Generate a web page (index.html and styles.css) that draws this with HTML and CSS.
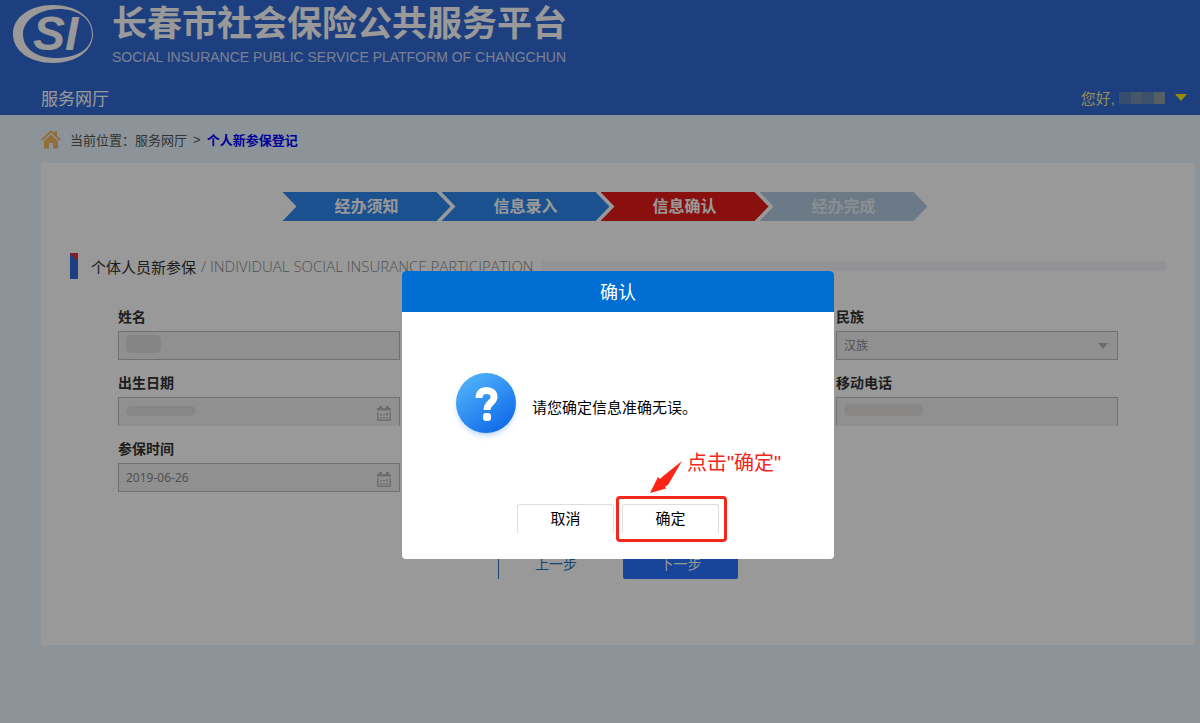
FILE: index.html
```html
<!DOCTYPE html>
<html lang="zh-CN">

<head>
    <meta charset="UTF-8">
    <meta name="viewport" content="width=device-width, initial-scale=1.0">
    <title>长春市社会保险公共服务平台</title>
    <link rel="stylesheet" href="styles.css">
</head>

<body>
    <header class="header">
        <div class="brand">
            <svg class="logo" width="82" height="60" viewBox="0 0 82 60">
                <path fill="#fff" fill-rule="evenodd" d="M41 1C18 1 1 13 1 30s17 29 40 29 40-12 40-29S64 1 41 1zM47 5c19 0 33 10 33 25S65 54 44 54 11 44 11 30 27 5 47 5z" />
                <text class="logo-text" x="21" y="46">SI</text>
            </svg>
            <div class="brand-text">
                <h1>长春市社会保险公共服务平台</h1>
                <p>SOCIAL INSURANCE PUBLIC SERVICE PLATFORM OF CHANGCHUN</p>
            </div>
        </div>
        <div class="nav">
            <a class="nav-title" href="#">服务网厅</a>
            <button type="button" class="user">
                您好,
                <span class="mosaic"><i></i><i></i><i></i><i></i></span>
                <span class="user-arrow"></span>
            </button>
        </div>
    </header>

    <nav class="breadcrumb">
        <svg width="20" height="20" viewBox="0 0 20 20" fill="#f0b860">
            <path d="M0 10.500L10 1l3.500 3.300V2H16v4.700l4 3.800-1.300 1.300L10 3.700l-8.700 8.100z" />
            <path d="M3 12l7-6.500 7 6.500v7.500h-5V14H8v5.500H3z" />
        </svg>
        <span>当前位置：</span>
        <a href="#">服务网厅</a>
        <span class="sep">&gt;</span>
        <a href="#" class="current">个人新参保登记</a>
    </nav>

    <main class="panel">
        <ol class="steps">
            <li class="first">经办须知</li>
            <li>信息录入</li>
            <li class="active">信息确认</li>
            <li class="todo">经办完成</li>
        </ol>

        <div class="section-title">
            <span class="mark"></span>
            <h2>个体人员新参保</h2>
            <span class="en">/ INDIVIDUAL SOCIAL INSURANCE PARTICIPATION</span>
            <span class="line"></span>
        </div>

        <form id="infoForm">
            <div class="fields">
                <div class="field">
                    <label for="name">姓名</label>
                    <div class="control">
                        <input type="text" id="name" readonly>
                        <span class="blur blur-name"></span>
                    </div>
                </div>
                <div class="field right">
                    <label for="nation">民族</label>
                    <div class="control">
                        <select id="nation">
                            <option>汉族</option>
                        </select>
                        <span class="select-arrow"></span>
                    </div>
                </div>
                <div class="field">
                    <label for="birthday">出生日期</label>
                    <div class="control">
                        <input type="text" id="birthday" class="open" readonly>
                        <span class="blur blur-date"></span>
                        <svg class="calendar" width="14" height="16" viewBox="0 0 14 16">
                            <path d="M0 5.500V3h2V1h3v2h4V1h3v2h2v2.500zM0 7h1.500v7.500h11V7H14v9H0zM3 9h2v1.500H3zM6 9h2v1.500H6zM9 8h2v2.500H9zM3 12h2v1.500H3zM6 12h2v1.500H6zM9 12h2v1.500H9z" />
                        </svg>
                    </div>
                </div>
                <div class="field right">
                    <label for="phone">移动电话</label>
                    <div class="control">
                        <input type="text" id="phone" class="open" readonly>
                        <span class="blur blur-phone"></span>
                    </div>
                </div>
                <div class="field">
                    <label for="start">参保时间</label>
                    <div class="control">
                        <input type="text" id="start" value="2019-06-26" readonly>
                        <svg class="calendar" width="14" height="16" viewBox="0 0 14 16">
                            <path d="M0 5.500V3h2V1h3v2h4V1h3v2h2v2.500zM0 7h1.500v7.500h11V7H14v9H0zM3 9h2v1.500H3zM6 9h2v1.500H6zM9 8h2v2.500H9zM3 12h2v1.500H3zM6 12h2v1.500H6zM9 12h2v1.500H9z" />
                        </svg>
                    </div>
                </div>
            </div>
            <div class="form-buttons">
                <button type="button" class="prev">上一步</button>
                <button type="button" class="next">下一步</button>
            </div>
        </form>
    </main>

    <!-- Confirm dialog -->
    <div class="overlay">
        <div class="dialog" role="dialog" aria-labelledby="dialogTitle">
            <h3 id="dialogTitle">确认</h3>
            <div class="dialog-body">
                <svg class="question" width="76" height="76" viewBox="0 0 76 76">
                    <defs>
                        <linearGradient id="ball" x1="0.100" y1="0" x2="0.800" y2="1">
                            <stop offset="0" stop-color="#55b8fc" />
                            <stop offset="1" stop-color="#0c68e8" />
                        </linearGradient>
                        <filter id="glow" x="-20%" y="-20%" width="140%" height="140%">
                            <feGaussianBlur stdDeviation="3" />
                        </filter>
                    </defs>
                    <circle cx="38" cy="42" r="28" fill="#a9cdfb" filter="url(#glow)" />
                    <circle cx="38" cy="38" r="30" fill="url(#ball)" />
                    <path d="M31 33c0-5 3-7.500 7.500-7.500s7.500 2.500 7.500 6.500c0 6-7 5.500-7 13" fill="none" stroke="#fff" stroke-width="7" />
                    <rect x="35" y="48" width="8" height="8" rx="3" fill="#fff" />
                </svg>
                <p>请您确定信息准确无误。</p>
            </div>
            <div class="dialog-buttons">
                <button type="button">取消</button>
                <button type="button">确定</button>
            </div>

            <!-- Hint for the user -->
            <span class="hint-box"></span>
            <svg class="hint-arrow" width="34" height="34" viewBox="0 0 34 34">
                <path fill="#fb2416" d="M32 1L18 25l-3 1.500 1 2L0 33 8 17l2 2 2-2z" />
            </svg>
            <span class="hint-text">点击"确定"</span>
        </div>
    </div>
</body>

</html>
```
FILE: styles.css
```css
* {
    box-sizing: border-box;
}

body {
    margin: 0;
    min-height: 100vh;
    background-color: #eaf5ff;
    color: #333;
    font-family: "Liberation Sans", "Noto Sans CJK SC", sans-serif;
    font-size: 14px;
}

h1,
h2,
h3,
p,
ol {
    margin: 0;
    padding: 0;
    font-weight: normal;
}

a {
    color: inherit;
    text-decoration: none;
}

button,
input,
select {
    font-family: inherit;
    border-radius: 0;
}

/* Header */
.header {
    height: 115px;
    background-color: #3369d4;
    color: #fff;
}

.brand {
    display: flex;
    gap: 18px;
    height: 83px;
    padding: 4px 12px 0;
}

.logo-text {
    fill: #fff;
    font-family: "Liberation Sans", sans-serif;
    font-size: 48px;
    font-weight: bold;
    font-style: italic;
}

.brand-text h1 {
    font-size: 35px;
    font-weight: bold;
    line-height: 40px;
}

.brand-text p {
    color: #c8d8f5;
    font-size: 14px;
    line-height: 26px;
}

.nav {
    display: flex;
    justify-content: space-between;
    align-items: center;
    height: 32px;
    padding: 0 13px 3px 41px;
}

.nav-title {
    font-size: 17px;
}

.user {
    display: flex;
    align-items: center;
    gap: 4px;
    padding: 0;
    border: none;
    background: none;
    color: #eeee90;
    font-size: 15px;
}

.mosaic {
    display: flex;
    width: 46px;
    height: 12px;
}

.mosaic i {
    flex: 1;
    background-color: #5a80b8;
}

.mosaic i:nth-child(2) {
    background-color: #7490ae;
}

.mosaic i:nth-child(3) {
    background-color: #6487b4;
}

.mosaic i:nth-child(4) {
    background-color: #8ca0a4;
}

.user-arrow {
    margin-left: 6px;
    border: 6px solid transparent;
    border-top: 7px solid #ffe600;
    border-bottom: none;
}

/* Breadcrumb */
.breadcrumb {
    display: flex;
    align-items: center;
    height: 48px;
    padding: 0 41px;
    color: #555;
    font-size: 13px;
}

.breadcrumb svg {
    margin-right: 9px;
}

.breadcrumb .sep {
    margin: 0 6px;
}

.breadcrumb .current {
    color: #00f;
    font-weight: bold;
}

/* Page panel */
.panel {
    margin: 0 5px 0 41px;
    padding: 29px 29px 66px;
    background-color: #fff;
}

.steps {
    display: flex;
    justify-content: center;
    margin-right: 26px;
    list-style: none;
}

.steps li {
    width: 168px;
    margin-left: -9px;
    background-color: #2d87ee;
    clip-path: polygon(0 0, 154px 0, 100% 50%, 154px 100%, 0 100%, 14px 50%);
    color: #fff;
    font-size: 16px;
    font-weight: bold;
    line-height: 29px;
    text-align: center;
}

.steps .first {
    margin-left: 0;
}

.steps .active {
    background-color: #e61a1a;
}

.steps .todo {
    background-color: #b2cbe0;
    color: #e6edf3;
}

.section-title {
    display: flex;
    align-items: center;
    height: 26px;
    margin-top: 32px;
}

.mark {
    width: 8px;
    height: 26px;
    margin-right: 13px;
    background: linear-gradient(45deg, #3369d4 75%, #e03040 75%);
}

.section-title h2 {
    font-size: 15px;
}

.section-title .en {
    margin: 0 8px 0 5px;
    color: #888;
    font-family: "Open Sans", sans-serif;
    font-size: 15px;
    font-weight: 300;
}

.section-title .line {
    flex: 1;
    height: 10px;
    background-color: #f5f5fc;
}

/* Form */
.fields {
    display: grid;
    grid-template-columns: repeat(3, 1fr);
    gap: 13px 77px;
    padding: 28px 48px 0;
}

.field {
    grid-column: 1;
}

.field.right {
    grid-column: 3;
}

.field label {
    display: block;
    margin-bottom: 4px;
    font-weight: bold;
    line-height: 20px;
}

.control {
    position: relative;
}

.control input,
.control select {
    display: block;
    width: 100%;
    height: 29px;
    padding: 0 7px;
    border: 1px solid #bbb;
    background-color: #f0f0f0;
    color: #888;
    font-family: "Noto Sans", "Noto Sans CJK SC", sans-serif;
    font-size: 12px;
    appearance: none;
}

.control .open {
    border-bottom-color: #f0f0f0;
}

.select-arrow {
    position: absolute;
    top: 12px;
    right: 10px;
    border: 5px solid transparent;
    border-top: 6px solid #b4b4b4;
    border-bottom: none;
}

.calendar {
    position: absolute;
    top: 8px;
    right: 9px;
    fill: #b8b8b8;
}

/* Masked personal data */
.blur {
    position: absolute;
    top: 4px;
    left: 8px;
    width: 35px;
    height: 18px;
    border-radius: 5px;
    background-color: #dedede;
}

.blur-date {
    top: 9px;
    width: 70px;
    height: 10px;
    background-color: #e2e2e2;
}

.blur-phone {
    top: 7px;
    width: 79px;
    height: 12px;
    background-color: #e4e1df;
}

.form-buttons {
    display: flex;
    justify-content: center;
    gap: 10px;
    margin-top: 58px;
}

.form-buttons button {
    width: 115px;
    height: 29px;
    padding: 0 0 3px;
    border: none;
    font-size: 14px;
}

.form-buttons .prev {
    border-left: 1px solid #2874b8;
    background-color: #fff;
    color: #2874b8;
}

.form-buttons .next {
    border-radius: 2px;
    background-color: #2673ff;
    color: #fff;
}

/* Dialog */
.overlay {
    position: fixed;
    inset: 0;
    display: flex;
    justify-content: center;
    align-items: flex-start;
    padding: 271px 0 0 36px;
    background-color: rgba(0, 0, 0, 0.4);
}

.dialog {
    position: relative;
    width: 432px;
    padding-bottom: 25px;
    border-radius: 4px;
    background-color: #fff;
    color: #000;
}

.dialog h3 {
    padding-top: 3px;
    border-radius: 4px 4px 0 0;
    background-color: #006ed2;
    color: #fff;
    font-size: 18px;
    line-height: 38px;
    text-align: center;
}

.dialog-body {
    display: flex;
    align-items: center;
    gap: 8px;
    padding: 53px 46px 0;
}

.dialog-body p {
    padding-top: 6px;
    font-size: 15px;
}

.dialog-buttons {
    display: flex;
    justify-content: center;
    gap: 8px;
    margin-top: 63px;
}

.dialog-buttons button {
    width: 97px;
    height: 30px;
    padding: 0 0 3px;
    border: 1px solid #ddd;
    border-bottom-color: #fff;
    border-radius: 3px;
    background-color: #fff;
    color: #000;
    font-size: 15px;
}

.hint-box {
    position: absolute;
    top: 225px;
    left: 214px;
    width: 111px;
    height: 46px;
    border: 3px solid #f5261a;
    border-radius: 4px;
    pointer-events: none;
}

.hint-arrow {
    position: absolute;
    top: 189px;
    left: 248px;
}

.hint-text {
    position: absolute;
    top: 177px;
    left: 285px;
    color: #f5261a;
    font-size: 20px;
    line-height: 30px;
}
```
